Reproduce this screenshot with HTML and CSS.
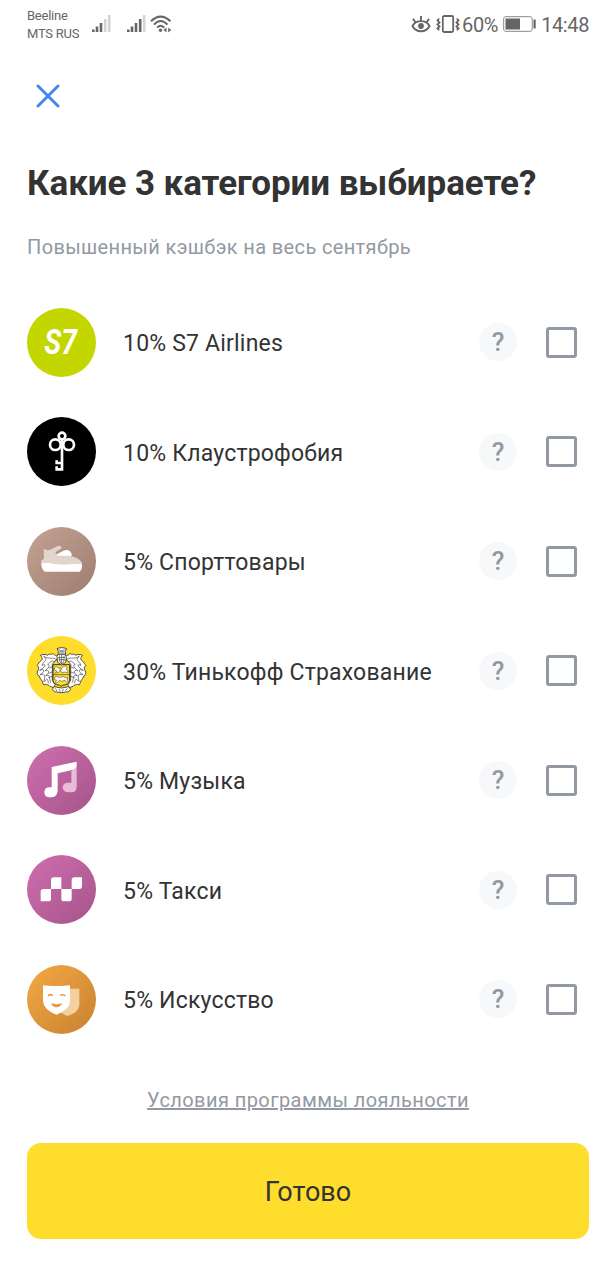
FILE: index.html
```html
<!DOCTYPE html>
<html lang="ru">
<head>
    <meta charset="UTF-8">
    <meta name="viewport" content="width=device-width, initial-scale=1.0">
    <title>Категории кэшбэка</title>
    <link rel="stylesheet" href="styles.css">
</head>
<body>
    <header class="status">
        <div class="operators">
            <span>Beeline</span>
            <span>MTS RUS</span>
        </div>
        <svg class="signal" viewBox="0 0 19 18">
            <path d="M1.3 14.5V17M5 11.5V17M9 8V17" />
            <path class="off" d="M13.2 4V17M17.2 0V17" />
        </svg>
        <svg class="signal second" viewBox="0 0 19 18">
            <path d="M1.3 14.5V17M5 11.5V17M9 8V17M13.2 4V17" />
            <path class="off" d="M17.2 0V17" />
        </svg>
        <svg class="wifi" viewBox="0 0 22 18">
            <path d="M1 6.2Q10.5 -3 20.5 6.2M4 9.6Q10.5 2.5 17.5 9.6M7.2 12.7Q10.5 9 14.2 12.7" />
            <circle cx="10.5" cy="15.2" r="1.7" />
            <path class="arrows" d="M16.5 12.5V17.5L13.5 15ZM18.2 12.5V17.5L21.2 15Z" />
        </svg>
        <div class="right">
            <svg class="eye" viewBox="0 0 20 18">
                <path d="M1.5 11C5 4.500 15 4.500 18.500 11C15 18 5 18 1.500 11ZM10 5.500V1M4.500 7.500L2 3.800M15.500 7.500L18 3.800" />
                <circle cx="10" cy="11" r="2.900" />
            </svg>
            <svg class="vibro" viewBox="0 0 24 18">
                <rect x="6.800" y="1" width="10.400" height="16" rx="1.500" />
                <path d="M3.200 3.500L1.500 5.500L3.500 7.500L1.500 9.500L3.500 11.500L1.500 13.500L3.200 15M20.800 3.500L22.500 5.500L20.500 7.500L22.500 9.500L20.500 11.500L22.500 13.500L20.800 15" />
            </svg>
            <span class="percent">60%</span>
            <svg class="battery" viewBox="0 0 34 16">
                <rect class="case" x=".7" y=".7" width="28.500" height="14.600" rx="2" />
                <rect x="2.500" y="2.500" width="14.500" height="11" />
                <rect x="30.500" y="3.500" width="2.200" height="9" />
            </svg>
            <span class="time">14:48</span>
        </div>
    </header>

    <button class="close">
        <svg viewBox="0 0 24 24"><path d="M2 2L22 22M22 2L2 22" /></svg>
    </button>

    <h1>Какие 3 категории выбираете?</h1>
    <p class="subtitle">Повышенный кэшбэк на весь сентябрь</p>

    <div class="list">
        <div class="row">
            <svg class="icon s7" viewBox="22 24 207 207">
                <text x="74" y="161" textLength="98" lengthAdjust="spacingAndGlyphs">S7</text>
            </svg>
            <span class="name">10% S7 Airlines</span>
            <span class="help">?</span>
            <span class="check"></span>
        </div>
        <div class="row">
            <svg class="icon quest" viewBox="22 22 207 207">
                <circle cx="127" cy="79" r="10" />
                <circle cx="107" cy="105" r="16" />
                <circle cx="147" cy="105" r="16" />
                <path d="M127 91V183M127 160H111V152M127 179H111V170" />
            </svg>
            <span class="name">10% Клаустрофобия</span>
            <span class="help">?</span>
            <span class="check"></span>
        </div>
        <div class="row">
            <svg class="icon sport" viewBox="22 22 207 207">
                <path fill="#fff" d="M66 122H150L187 131C188 144 186 151 180 156H76C68 152 63 140 66 122Z" />
                <path fill="#fff" d="M107 106C120 101 131 91 140 91C149 91 155 96 157 107L148 113H113Z" />
                <path fill="#e3d4ce" d="M72 87Q82 94 92 90L114 79Q121 77 127 85L108 97Q106 103 116 108H147Q178 112 187 129Q188 133 184 134C160 131 139 138 112 134C97 131 84 128 66 131Q67 120 73 115Z" />
            </svg>
            <span class="name">5% Спорттовары</span>
            <span class="help">?</span>
            <span class="check"></span>
        </div>
        <div class="row">
            <svg class="icon crest" viewBox="22 20 207 207">
                <defs>
                    <g id="mantle">
                        <path class="leaf" d="M116 84C109 75 105 81 100 72C95 79 88 70 84 78C78 74 68 75 62 78C68 84 70 90 64 94C57 99 57 104 52 108C58 113 59 118 54 125C51 129 53 135 55 138C61 138 59 146 65 152C69 154 68 162 73 167C79 162 82 167 88 168C92 174 96 171 101 175L108 164L98 153V105Z" />
                        <path class="vein" d="M111 92C99 80 93 93 72 81C88 93 71 94 67 108C84 102 75 115 60 123C77 117 76 128 61 136C80 131 75 144 73 157C86 142 83 153 87 162M105 97C91 91 91 103 84 105C95 108 83 119 77 124C94 121 86 134 78 139C93 134 88 146 93 160M98 112L88 117M97 128L87 132M97 141L86 145" />
                    </g>
                </defs>
                <use href="#mantle" />
                <use href="#mantle" transform="translate(251 0) scale(-1 1)" />
                <path class="leaf" d="M104 172Q125 180 147 172L153 180L147 187Q125 193 104 187L98 180Z" />
                <path class="vein" d="M107 177L112 185M118 179L122 187M131 179L128 187M143 177L137 185" />
                <path class="shield" d="M100 106H150V156Q150 165 139 166Q128 167 125 171Q121 167 111 166Q100 164 100 155Z" />
                <path class="vein" d="M100 136H150" />
                <path class="beast" d="M105 116L109 111L114 116L122 115L120 127L116 129L107 132L112 125L104 122Z" />
                <path class="beast" d="M129 113L136 110L143 114L139 119L145 125L144 131L137 128L126 130L123 124Z" />
                <path class="beast" d="M105 144L110 141L119 144L132 142L139 146L144 144L143 151L147 160L140 158L136 153L126 156L119 153L113 160L106 160L111 153L105 151Z" />
                <path class="leaf" d="M112 81L116 73H134L140 82L138 99L126 107L114 99Z" />
                <path class="vein" d="M115 85L137 84M120 78V95L126 104L133 95V79M126 76V104M117 91H135" />
                <path class="leaf" d="M112 58C120 54 133 54 141 58L137 66L138 75H115L116 66Z" />
                <path class="vein" d="M116 61Q126 66 137 61M119 67H134M118 71H135" />
            </svg>
            <span class="name">30% Тинькофф Страхование</span>
            <span class="help">?</span>
            <span class="check"></span>
        </div>
        <div class="row">
            <svg class="icon music" viewBox="22 18 207 207">
                <path fill="#e8bbd8" d="M155 94L171 76V141Q171 157 155 157H145Q129 156 129 142Q130 128 145 128H155Z" />
                <path fill="#fff" d="M96 81L171 65V79Q167 87 155 91L114 100V153Q112 172 94 172H87Q74 170 74 156Q75 142 88 142H96Z" />
            </svg>
            <span class="name">5% Музыка</span>
            <span class="help">?</span>
            <span class="check"></span>
        </div>
        <div class="row">
            <svg class="icon taxi" viewBox="22 17 207 207">
                <path d="M102 84H125V119H94V92Q94 84 102 84ZM164 84H187V111Q187 119 179 119H156V92Q156 84 164 84ZM71 119H94V148Q94 156 86 156H63V127Q63 119 71 119ZM125 119H156V148Q156 156 148 156H133Q125 156 125 148Z" />
            </svg>
            <span class="name">5% Такси</span>
            <span class="help">?</span>
            <span class="check"></span>
        </div>
        <div class="row">
            <svg class="icon art" viewBox="22 31 207 207">
                <path fill="#f4cfa0" d="M150 102H179V151Q177 174 143 184Q131 179 124 173Q151 159 150 139Z" />
                <path fill="#fff" d="M70 92Q90 95 110 94Q131 95 151 92V142Q149 166 110 180Q72 166 70 140Z" />
                <path fill="#e69c3e" d="M94 146Q111 151 127 146Q123 158 110 158Q98 157 94 146Z" />
                <path class="eyes" d="M85 124Q91 117 99 123M122 123Q130 117 137 124" />
            </svg>
            <span class="name">5% Искусство</span>
            <span class="help">?</span>
            <span class="check"></span>
        </div>
    </div>

    <a class="terms">Условия программы лояльности</a>
    <button class="done">Готово</button>
</body>
</html>
```

FILE: styles.css
```css
* {
    box-sizing: border-box;
}
body {
    margin: 0;
    padding: 0 27px;
    height: 1280px;
    display: flex;
    flex-direction: column;
    background: #fff;
    color: #333;
    font-family: Roboto, sans-serif;
}
svg {
    display: block;
    flex-shrink: 0;
}
button {
    border: 0;
    padding: 0;
    font-family: inherit;
    color: inherit;
}
.status {
    height: 48px;
    display: flex;
    align-items: center;
    color: #666;
}
.operators {
    display: flex;
    flex-direction: column;
    width: 65px;
    padding-top: 1px;
    font-size: 13px;
    line-height: 18px;
    letter-spacing: -0.25px;
    white-space: nowrap;
}
.signal {
    width: 19px;
    height: 18px;
    fill: none;
    stroke: #666;
    stroke-width: 2.6;
}
.signal .off {
    stroke: #d4d4d4;
}
.second {
    margin-left: 16px;
}
.wifi {
    width: 22px;
    height: 18px;
    margin-left: 4px;
    fill: none;
    stroke: #666;
    stroke-width: 2;
}
.wifi circle, .wifi .arrows {
    fill: #666;
    stroke: none;
}
.right {
    display: flex;
    align-items: center;
    margin-left: auto;
}
.eye {
    width: 20px;
    height: 18px;
    fill: none;
    stroke: #666;
    stroke-width: 1.9;
}
.eye circle {
    fill: #666;
    stroke: none;
}
.vibro {
    width: 24px;
    height: 18px;
    margin-left: 5px;
    fill: none;
    stroke: #666;
    stroke-width: 1.8;
}
.percent {
    margin-left: 2px;
    padding-top: 2px;
    font-size: 20px;
    letter-spacing: -0.3px;
}
.battery {
    width: 34px;
    height: 16px;
    margin-left: 5px;
    fill: #666;
}
.battery .case {
    fill: none;
    stroke: #888;
}
.time {
    margin-left: 4px;
    padding-top: 2px;
    font-size: 20px;
    letter-spacing: -0.4px;
}
.close {
    width: 24px;
    height: 24px;
    margin: 36px 0 0 9px;
    background: none;
}
.close svg {
    width: 24px;
    height: 24px;
    fill: none;
    stroke: #4a86e8;
    stroke-width: 3;
    stroke-linecap: round;
}
h1 {
    margin: 54px 0 0;
    font-size: 35px;
    line-height: 44px;
    font-weight: 700;
    letter-spacing: -0.08px;
    white-space: nowrap;
}
.subtitle {
    margin: 27px 0 0;
    font-size: 20px;
    line-height: 28px;
    letter-spacing: 0.36px;
    color: #9299a2;
}
.list {
    margin-top: 26.5px;
}
.row {
    display: flex;
    align-items: center;
    height: 109.5px;
    padding-right: 12px;
}
.icon {
    width: 69px;
    height: 69px;
    border-radius: 50%;
}
.name {
    flex: 1;
    margin-left: 27px;
    padding-top: 3px;
    font-size: 23px;
    letter-spacing: 0.2px;
    white-space: nowrap;
}
.help {
    width: 38px;
    height: 38px;
    border-radius: 50%;
    background: #f6f8fa;
    color: #9299a2;
    font-size: 26px;
    font-weight: 500;
    line-height: 38px;
    text-align: center;
}
.check {
    width: 31px;
    height: 31px;
    margin-left: 29px;
    border: 3px solid #9299a2;
    border-radius: 3px;
}
.s7 {
    background: #c4d600;
    fill: #fff;
    font-size: 103px;
    font-style: italic;
    font-weight: 700;
}
.quest {
    background: #000;
    fill: none;
    stroke: #fff;
    stroke-width: 8;
}
.sport {
    background: linear-gradient(135deg, #c5a394, #9b7d70);
}
.crest {
    background: #ffdd2d;
    stroke: #333;
    stroke-width: 2.5;
}
.crest .leaf, .crest .beast {
    fill: #fff;
}
.crest .vein {
    fill: none;
    stroke-width: 1.8;
}
.crest .shield {
    fill: #ffdd2d;
    stroke-width: 3;
}
.crest .beast {
    stroke-width: 1.5;
}
.music, .taxi {
    background: linear-gradient(135deg, #d06fb0, #a55489);
}
.taxi {
    fill: #fff;
}
.art {
    background: linear-gradient(135deg, #f5a945, #c78230);
}
.art .eyes {
    fill: none;
    stroke: #e69c3e;
    stroke-width: 5;
}
.terms {
    align-self: center;
    margin-top: 32px;
    font-size: 20px;
    line-height: 28px;
    letter-spacing: 0.42px;
    color: #9299a2;
    text-decoration: underline;
}
.done {
    height: 96px;
    margin-top: 29px;
    padding-top: 2px;
    border-radius: 14px;
    background: #ffdd2d;
    font-size: 27px;
}
```
